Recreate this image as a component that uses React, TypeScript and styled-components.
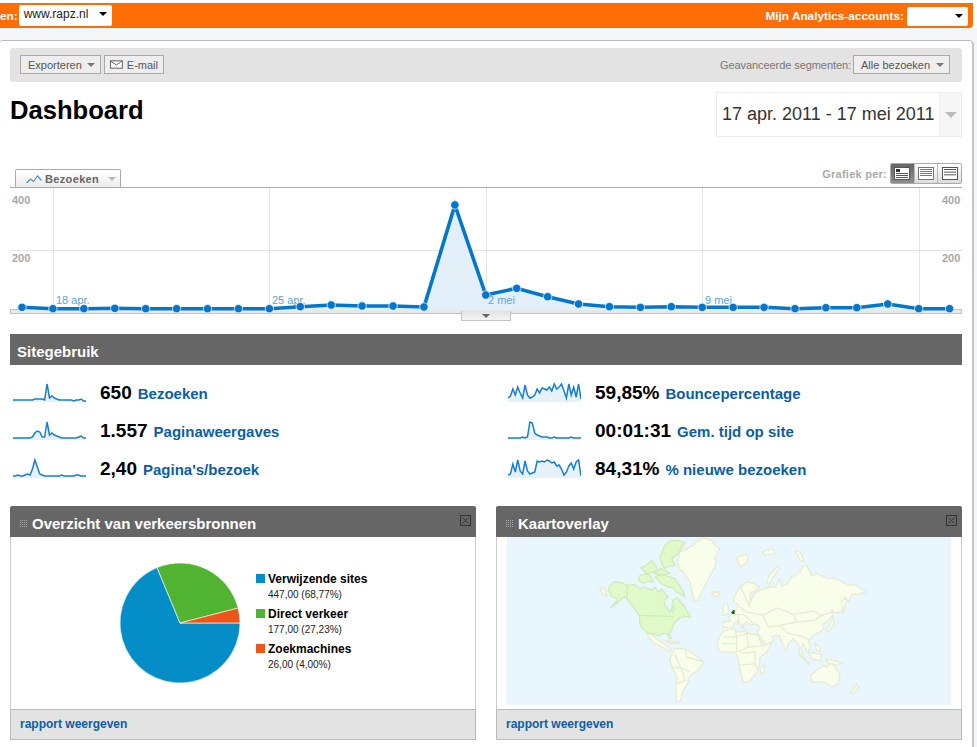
import React from 'react';
import styled, {createGlobalStyle} from 'styled-components';

const GlobalStyle = createGlobalStyle`
  html, body {
    margin: 0;
    padding: 0;
    background: #fff;
    font-family: "Liberation Sans", Arial, sans-serif;
  }
`;

const Page = styled.div`
  width: 977px;
  height: 747px;
  padding-top: 3px;
  box-sizing: border-box;
  overflow: hidden;
`;

const TopBar = styled.div`
  width: 973px;
  height: 25px;
  box-sizing: border-box;
  padding: 0 5px 0 0;
  background: #ff6d06;
  border-radius: 0 0 4px 0;
  display: flex;
  align-items: center;
  justify-content: space-between;
  color: #fff;
  font-size: 11.8px;
  font-weight: bold;
`;

const TopGroup = styled.div<{$gap: number}>`
  display: flex;
  align-items: center;
  gap: ${p => p.$gap}px;
`;

const TopSelect = styled.div<{$width: number; $height: number}>`
  width: ${p => p.$width}px;
  height: ${p => p.$height}px;
  box-sizing: border-box;
  padding: 0 5px 2px 5px;
  background: #fff;
  border-radius: 2px;
  display: flex;
  align-items: center;
  justify-content: space-between;
  color: #222;
  font-size: 12px;
  font-weight: normal;
  margin-top: ${p => (p.$height === 21 ? -1 : 2)}px;
`;

const BlackArrow = styled.span`
  margin-left: auto;
  border: 4px solid transparent;
  border-top: 4px solid #000;
  border-bottom: 0;
`;

const Gutter = styled.div`
  background: #f5f6f8;
  padding: 12px 3px 0 0;
  height: 719px;
  box-sizing: border-box;
`;

const Panel = styled.div`
  width: 974px;
  height: 707px;
  box-sizing: border-box;
  background: #fff;
  border-top: 1px solid #bbb;
  border-right: 2px solid #c4c4c4;
  border-radius: 3px 5px 0 0;
  padding: 7px 10px 0;
`;

const Toolbar = styled.div`
  height: 34px;
  box-sizing: border-box;
  padding: 7px 12px 0 10px;
  background: #e3e3e3;
  border-radius: 3px;
  display: flex;
  align-items: flex-start;
  gap: 3px;
  font-size: 11px;
`;

const ToolButton = styled.div<{$width: number}>`
  width: ${p => p.$width}px;
  height: 19px;
  box-sizing: border-box;
  padding: 0 5px 0 7px;
  border: 1px solid #a9a9a9;
  background: #eee;
  display: flex;
  align-items: center;
  gap: 4px;
  color: #555;
  white-space: nowrap;
`;

const MailButton = styled(ToolButton)`
  padding-left: 5px;
`;

const GrayArrow = styled.span<{$size?: number; $color?: string}>`
  margin-left: auto;
  border: ${p => p.$size ?? 4}px solid transparent;
  border-top: ${p => p.$size ?? 4}px solid ${p => p.$color ?? '#777'};
  border-bottom: 0;
`;

const CenterArrow = styled(GrayArrow)`
  margin-left: 0;
`;

const SegmentLabel = styled.span`
  margin-left: auto;
  color: #777;
  line-height: 20px;
  margin-right: -1px;
  letter-spacing: -0.07px;
`;

const TitleRow = styled.div`
  margin-top: 10px;
  height: 45px;
  display: flex;
  justify-content: space-between;
`;

const Title = styled.h1`
  margin: 0;
  font-size: 25.6px;
  line-height: 36px;
  font-weight: bold;
  color: #000;
`;

const DateBox = styled.div`
  width: 246px;
  box-sizing: border-box;
  border: 1px solid #eee;
  display: flex;
  align-items: center;
  justify-content: space-between;
  padding-left: 5px;
  font-size: 18px;
  color: #333;
  white-space: nowrap;
`;

const DateArrow = styled.div`
  width: 21px;
  height: 100%;
  background: #f6f6f6;
  border-left: 1px solid #eee;
  display: flex;
  align-items: center;
  justify-content: center;
`;

const ChartHeader = styled.div`
  margin-top: 26px;
  height: 24px;
  display: flex;
  justify-content: space-between;
  align-items: flex-end;
`;

const ChartTab = styled.div`
  width: 106px;
  height: 19px;
  margin: 0 0 -1px 5px;
  box-sizing: border-box;
  padding: 0 4px 0 10px;
  border: 1px solid #aaa;
  border-bottom: 0;
  border-radius: 2px 2px 0 0;
  background: linear-gradient(#fff, #ececec);
  display: flex;
  align-items: center;
  gap: 3px;
  font-size: 11px;
  font-weight: bold;
  color: #666;
  letter-spacing: 0.35px;
`;

const PeriodGroup = styled.div`
  align-self: flex-start;
  display: flex;
  align-items: center;
  gap: 3px;
  font-size: 11px;
  font-weight: bold;
  color: #aaa;
  letter-spacing: 0.25px;
`;

const PeriodButtons = styled.div`
  display: flex;
  width: 72px;
  box-sizing: border-box;
  height: 21px;
  border: 1px solid #aaa;
  border-radius: 2px;
  overflow: hidden;
`;

const PeriodButton = styled.div<{$active?: boolean}>`
  flex: 1;
  display: flex;
  align-items: center;
  justify-content: center;
  background: ${p => (p.$active ? 'linear-gradient(#666, #8e8e8e)' : 'linear-gradient(#fff, #ddd)')};
  border-left: ${p => (p.$active ? '0' : '1px solid #bbb')};
`;

const ChartWrap = styled.div`
  position: relative;
  height: 134px;
  border-top: 1px solid #aaa;
`;

const ChartSvg = styled.svg`
  display: block;
`;

const AxisText = styled.text`
  font: bold 11px "Liberation Sans", Arial, sans-serif;
  fill: #a8a8a8;
`;

const DateText = styled.text`
  font: 11px "Liberation Sans", Arial, sans-serif;
  fill: #5ca4d8;
`;

const ChartHandle = styled.div`
  position: absolute;
  left: 451px;
  top: 123px;
  width: 50px;
  height: 10px;
  box-sizing: border-box;
  border: 1px solid #c4c4c4;
  border-top: 0;
  background: linear-gradient(#e2e2e2, #f4f4f4);
  display: flex;
  align-items: center;
  justify-content: center;
`;

const SectionBar = styled.div`
  margin-top: 12px;
  height: 31px;
  padding-left: 7px;
  background: #666;
  color: #fff;
  font-size: 15px;
  font-weight: bold;
  line-height: 35px;
`;

const MetricGrid = styled.div`
  padding: 9px 0 0 3px;
  display: grid;
  grid-template-columns: 495px 1fr;
  grid-auto-rows: 38px;
`;

const MetricRow = styled.div`
  display: flex;
  align-items: center;
`;

const Spark = styled.svg`
  flex: none;
  margin-right: 14px;
`;

const MetricValue = styled.span`
  font-size: 19px;
  font-weight: bold;
  color: #000;
  margin-right: 6px;
`;

const MetricLabel = styled.span`
  font-size: 15px;
  font-weight: bold;
  color: #0b5ea6;
`;

const CardRow = styled.div`
  margin-top: 18px;
  display: flex;
  gap: 20px;
`;

const Card = styled.div`
  width: 466px;
`;

const CardHead = styled.div`
  height: 31px;
  box-sizing: border-box;
  padding: 0 5px 0 10px;
  background: #666;
  border-radius: 2px 2px 0 0;
  display: flex;
  align-items: flex-start;
  gap: 4px;
  color: #fff;
  font-size: 15px;
  font-weight: bold;
  line-height: 36px;
`;

const Grip = styled.svg`
  margin-top: 14px;
  flex: none;
`;

const CloseIcon = styled.svg`
  margin: 9px 0 0 auto;
  flex: none;
`;

const CardBody = styled.div<{$map?: boolean}>`
  height: 172px;
  box-sizing: border-box;
  border: 1px solid #ccc;
  border-width: 0 1px;
  display: flex;
  align-items: ${p => (p.$map ? 'flex-start' : 'center')};
  padding: ${p => (p.$map ? '0 10px' : '0 0 0 107.5px')};
`;

const PieSvg = styled.svg`
  flex: none;
`;

const Legend = styled.div`
  margin: 3px 0 0 15.5px;
`;

const LegendItem = styled.div`
  height: 35px;
  position: relative;
  padding: 0 0 0 12px;
  color: #000;
`;

const LegendSwatch = styled.span<{$color: string}>`
  position: absolute;
  left: 0;
  top: 2px;
  width: 9px;
  height: 9px;
  background: ${p => p.$color};
`;

const LegendName = styled.div`
  font-size: 12px;
  font-weight: bold;
  line-height: 15px;
`;

const LegendValue = styled.div`
  font-size: 10px;
  line-height: 15px;
  color: #222;
`;

const CardFoot = styled.div`
  height: 31px;
  box-sizing: border-box;
  padding-left: 9px;
  background: #e3e3e3;
  border: 1px solid #bbb;
  color: #0b5ea6;
  font-size: 12px;
  font-weight: bold;
  line-height: 28px;
`;

const MapSvg = styled.svg`
  display: block;
  background: #e9f6fe;
`;

// y positions read off the reference, as 3x crop pixels
const visitsY = [
  352, 356, 356, 355, 356, 356, 356, 356, 356, 350, 345, 348, 348, 351, 45, 315,
  295, 320, 342, 350, 352, 350, 352, 352, 352, 356, 353, 353, 342, 356, 356
];
const points = visitsY.map((y, i) => [22 + i * 30.92, 190 + y / 3]);
const linePoints = points.map(p => `${p[0].toFixed(1)},${p[1].toFixed(1)}`).join(' ');
const areaPoints = `22,310 ${linePoints} 950,310`;

const sparkPath = (values: number[]) =>
  values.map((v, i) => `${(i * 73) / 30},${19 - v}`).join(' ');

const METRICS = [
  {
    value: '650', label: 'Bezoeken',
    spark: [1, 1, 1, 1, 1, 1, 1, 1, 1, 2, 2, 2, 2, 1, 17, 3, 5, 3, 2, 1, 1, 1, 1, 1, 1, 0, 1, 1, 2, 0, 0]
  },
  {
    value: '59,85%', label: 'Bouncepercentage',
    spark: [3, 5, 12, 6, 14, 8, 3, 16, 6, 3, 4, 6, 12, 8, 13, 12, 11, 14, 10, 17, 12, 14, 17, 10, 3, 17, 6, 14, 4, 17, 2]
  },
  {
    value: '1.557', label: 'Paginaweergaves',
    spark: [1, 1, 1, 1, 1, 1, 1, 1, 2, 6, 8, 7, 2, 2, 17, 4, 6, 4, 3, 2, 1, 1, 1, 1, 1, 1, 1, 2, 3, 1, 1]
  },
  {
    value: '00:01:31', label: 'Gem. tijd op site',
    spark: [1, 1, 1, 1, 1, 1, 2, 1, 2, 17, 16, 6, 4, 3, 2, 2, 2, 1, 1, 2, 1, 1, 1, 1, 1, 1, 2, 1, 1, 1, 1]
  },
  {
    value: '2,40', label: "Pagina's/bezoek",
    spark: [1, 1, 2, 1, 1, 2, 3, 2, 8, 17, 10, 3, 2, 1, 1, 1, 1, 1, 1, 1, 2, 1, 1, 1, 1, 1, 2, 2, 1, 1, 1]
  },
  {
    value: '84,31%', label: '% nieuwe bezoeken',
    spark: [2, 3, 13, 5, 17, 6, 3, 16, 6, 3, 4, 5, 16, 15, 16, 15, 17, 16, 14, 15, 11, 12, 8, 2, 5, 11, 14, 8, 15, 17, 1]
  }
];

const Sparkline = ({values}: {values: number[]}) => (
  <Spark width={73} height={22} viewBox="0 0 73 22">
    <polygon points={`0,20 ${sparkPath(values)} 73,20`} fill="#e6f1fa" />
    <polyline points={sparkPath(values)} fill="none" stroke="#1580d0" strokeWidth={1.5} />
  </Spark>
);

const PieChart = () => {
  const r = 60;
  const at = (deg: number) => {
    const a = (deg * Math.PI) / 180;
    return `${61 + r * Math.cos(a)},${61 - r * Math.sin(a)}`;
  };
  return (
    <PieSvg width={122} height={122} viewBox="0 0 122 122">
      <path d={`M61,61 L${at(0)} A60,60 0 1 1 ${at(112.5)} Z`} fill="#058dc7" stroke="#fff" strokeWidth={0.6} />
      <path d={`M61,61 L${at(112.5)} A60,60 0 0 1 ${at(14.4)} Z`} fill="#50b432" stroke="#fff" strokeWidth={0.6} />
      <path d={`M61,61 L${at(14.4)} A60,60 0 0 1 ${at(0)} Z`} fill="#ed561b" stroke="#fff" strokeWidth={0.6} />
    </PieSvg>
  );
};

const GREEN_LAND = [
  '58,150 70,135 90,135 112,145 135,143 150,155 165,150 185,160 195,150 205,165 215,155 225,170 235,180 222,190 225,205 240,225 250,210 248,190 262,183 272,195 285,210 292,225 302,240 285,238 270,242 262,250 250,262 245,280 238,290 245,305 238,305 232,290 215,290 205,297 195,292 175,288 158,275 150,262 148,235 130,210 118,195 105,180 95,185 80,200 62,212 78,195 82,185 65,178 55,162',
  '210,60 218,40 225,25 240,12 255,10 285,15 275,32 265,50 245,65 255,85 235,88 225,95 215,80',
  '195,120 210,113 225,115 255,125 268,145 280,165 285,180 260,165 248,152 235,150 215,140',
  '150,115 175,110 192,135 175,132 160,140 145,130',
  '152,92 170,85 185,70 195,82 205,100 170,110',
  '190,108 215,95 240,108 215,115',
  '245,205 255,215 248,225'
];

const WEST_LAND = [
  '270,45 290,35 310,25 325,10 340,3 365,10 375,25 390,35 375,60 378,75 375,90 360,115 350,135 335,165 325,190 312,190 305,160 300,135 280,105 268,95 262,75',
  '168,288 185,292 205,310 225,322 245,340 240,345 215,330 195,320 180,305',
  '225,310 255,315 270,318 245,320',
  '240,365 255,335 285,335 310,350 342,375 325,400 300,415 295,435 280,460 270,495 258,490 258,450 262,420 245,390',
  '28,150 45,155 52,178 38,170',
  '365,165 385,165 385,178 372,178'
];

const EAST_LAND = [
  '68,255 92,252 85,240 95,230 110,215 118,205 100,195 105,175 120,150 140,135 160,140 178,150 165,165 152,165 150,200 160,175 180,160 195,155 210,150 225,150 240,125 245,148 262,140 275,120 300,105 310,85 320,85 335,115 350,110 385,125 395,122 420,130 440,143 470,145 497,165 475,172 455,172 445,195 435,180 428,215 415,228 400,225 395,218 398,235 385,250 368,262 372,275 360,285 345,292 335,300 325,315 332,335 320,340 310,320 303,335 313,365 300,350 295,320 280,305 265,320 258,342 245,315 238,295 215,298 222,310 200,325 180,300 172,285 180,270 170,262 150,262 140,255 128,265 135,278 120,265 112,252 100,262 100,270 70,272',
  '52,322 58,300 70,283 90,277 105,275 112,285 135,283 150,290 172,292 180,312 190,325 215,318 200,345 180,360 178,385 170,405 150,432 130,438 125,420 118,390 115,365 105,345 85,345 65,345 55,335',
  '332,415 345,405 355,395 375,385 380,392 395,375 405,392 420,410 415,440 395,450 380,440 370,435 335,435',
  '180,395 195,382 190,410 183,412',
  '70,205 82,200 88,228 68,235',
  '35,168 55,165 58,175 42,178',
  '110,60 140,52 145,70 125,90 115,80',
  '185,45 220,35 225,50 195,55',
  '200,135 210,110 235,88 238,95 220,120 205,145',
  '285,40 300,45 315,75 300,70',
  '295,350 330,385 325,375 300,355',
  '325,345 365,352 360,372 335,365',
  '345,320 360,330 360,345 350,340',
  '375,365 430,378 410,385 385,378',
  '425,190 440,185 430,230',
  '380,280 400,240 402,262 385,285',
  '450,470 470,440 475,452 455,472'
];

const EAST_BORDERS = [
  '188,235 230,213 280,232 340,222 365,235 395,225',
  '280,232 290,255 345,250 365,235',
  '188,235 205,270 240,265 290,255',
  '240,265 265,290 300,295 330,310',
  '120,210 140,225 165,230 190,235',
  '100,235 130,232 145,245 165,262',
  '120,145 140,190 150,210',
  '115,240 118,262',
  '70,300 110,300 110,345',
  '105,275 110,300 140,290 145,330 115,345',
  '140,290 175,295',
  '145,330 195,325',
  '115,385 165,380 175,400',
  '125,350 165,345 165,380',
  '65,320 110,320'
];

const WEST_BORDERS = [
  '255,350 270,390 300,405',
  '245,390 275,395 285,430 262,440',
  '285,335 290,360 340,375'
];

const WorldMap = () => (
  <MapSvg width={444} height={168} viewBox="507 537 444 168">
    <g transform="translate(590 537) scale(0.3333)" strokeWidth={4} strokeLinejoin="round">
      {WEST_LAND.map(p => <polygon key={p} points={p} fill="#f8fee9" stroke="#e6ecd4" />)}
      {GREEN_LAND.map(p => <polygon key={p} points={p} fill="#dff9c9" stroke="#d2eabd" />)}
      <polyline points="148,235 240,238 250,242" fill="none" stroke="#d2eabd" />
      <polyline points="112,145 112,190" fill="none" stroke="#d2eabd" />
      {WEST_BORDERS.map(p => <polyline key={p} points={p} fill="none" stroke="#e6ecd4" />)}
    </g>
    <g transform="translate(700 537) scale(0.3333)" strokeWidth={4} strokeLinejoin="round">
      {EAST_LAND.map(p => <polygon key={p} points={p} fill="#f8fee9" stroke="#e6ecd4" />)}
      {EAST_BORDERS.map(p => <polyline key={p} points={p} fill="none" stroke="#e6ecd4" />)}
      <polygon points="94,226 100,219 104,220 104,231 96,231" fill="#1a6a10" />
    </g>
  </MapSvg>
);

const GripIcon = () => (
  <Grip width={8} height={8} viewBox="0 0 8 8">
    <path d="M0 .5h8M0 2.5h8M0 4.5h8M0 6.5h8" stroke="#aaa" strokeDasharray="1 1" />
  </Grip>
);

const CardClose = () => (
  <CloseIcon width={11} height={11} viewBox="0 0 11 11">
    <rect x={0.5} y={0.5} width={10} height={10} fill="none" stroke="#333" />
    <path d="M2.5 2.5l6 6M8.5 2.5l-6 6" stroke="#333" />
  </CloseIcon>
);

const MailIcon = () => (
  <svg width={14} height={9} viewBox="0 0 14 9">
    <rect x={0.5} y={0.5} width={13} height={8} fill="#fff" stroke="#555" />
    <path d="M1 1l6 4 6-4" fill="none" stroke="#555" />
  </svg>
);

const TrendIcon = () => (
  <svg width={16} height={10} viewBox="0 0 16 10">
    <path d="M.5 9l4-4 3 2.5L11.5 2l4 4.5" fill="none" stroke="#4a90d6" strokeWidth={1.2} />
  </svg>
);

const PeriodIcon = ({color, head, rows}: {color: string; head?: boolean; rows: number}) => (
  <svg width={16} height={13} viewBox="0 0 16 13">
    <rect x={0.5} y={0.5} width={15} height={12} fill="#fff" stroke={color} />
    {head && <rect x={2} y={2} width={4} height={3} fill="#333" />}
    {Array.from({length: rows}).map((_, i) => {
      const y = head ? 6.5 + i * 2 : 2.5 + (i * 8) / rows;
      return <line key={i} x1={2} x2={14} y1={y} y2={y} stroke={color} />;
    })}
  </svg>
);

const GRID_X = [53, 269, 486, 702, 919];

export default function App() {
  return (
    <Page>
      <GlobalStyle />
      <TopBar>
        <TopGroup $gap={1}>
          <span>en:</span>
          <TopSelect $width={93} $height={21}>www.rapz.nl<BlackArrow /></TopSelect>
        </TopGroup>
        <TopGroup $gap={3}>
          <span>Mijn Analytics-accounts:</span>
          <TopSelect $width={61} $height={19}><BlackArrow /></TopSelect>
        </TopGroup>
      </TopBar>
      <Gutter>
        <Panel>
          <Toolbar>
            <ToolButton $width={81}>Exporteren<GrayArrow /></ToolButton>
            <MailButton $width={60}><MailIcon />E-mail</MailButton>
            <SegmentLabel>Geavanceerde segmenten:</SegmentLabel>
            <ToolButton $width={97}>Alle bezoeken<GrayArrow /></ToolButton>
          </Toolbar>
          <TitleRow>
            <Title>Dashboard</Title>
            <DateBox>
              17 apr. 2011 - 17 mei 2011
              <DateArrow><CenterArrow $size={6} $color="#bbb" /></DateArrow>
            </DateBox>
          </TitleRow>
          <ChartHeader>
            <ChartTab><TrendIcon />Bezoeken<GrayArrow $size={4} $color="#bbb" /></ChartTab>
            <PeriodGroup>
              Grafiek per:
              <PeriodButtons>
                <PeriodButton $active><PeriodIcon color="#555" head rows={3} /></PeriodButton>
                <PeriodButton><PeriodIcon color="#777" rows={4} /></PeriodButton>
                <PeriodButton><PeriodIcon color="#555" rows={3} /></PeriodButton>
              </PeriodButtons>
            </PeriodGroup>
          </ChartHeader>
          <ChartWrap>
            <ChartSvg width={952} height={134} viewBox="10 188 952 134">
              {GRID_X.map(x => <line key={x} x1={x + 0.5} x2={x + 0.5} y1={188} y2={310} stroke="#e4e4e4" />)}
              <line x1={10} x2={962} y1={250.5} y2={250.5} stroke="#e4e4e4" />
              <rect x={10.5} y={309.5} width={951} height={4} fill="#e8e8e8" stroke="#c4c4c4" />
              <polygon points={areaPoints} fill="#e2eff9" />
              <AxisText x={12} y={204}>400</AxisText>
              <AxisText x={12} y={262}>200</AxisText>
              <AxisText x={942} y={204}>400</AxisText>
              <AxisText x={942} y={262}>200</AxisText>
              <DateText x={56} y={304}>18 apr.</DateText>
              <DateText x={272} y={304}>25 apr.</DateText>
              <DateText x={488} y={304}>2 mei</DateText>
              <DateText x={705} y={304}>9 mei</DateText>
              <polyline points={linePoints} fill="none" stroke="#0077cc" strokeWidth={3.6} />
              {points.map(p => (
                <circle key={p[0]} cx={p[0]} cy={p[1]} r={4.2} fill="#0077cc" stroke="#fff" strokeWidth={0.7} />
              ))}
            </ChartSvg>
            <ChartHandle><CenterArrow $size={4} $color="#666" /></ChartHandle>
          </ChartWrap>
          <SectionBar>Sitegebruik</SectionBar>
          <MetricGrid>
            {METRICS.map(m => (
              <MetricRow key={m.label}>
                <Sparkline values={m.spark} />
                <MetricValue>{m.value}</MetricValue>
                <MetricLabel>{m.label}</MetricLabel>
              </MetricRow>
            ))}
          </MetricGrid>
          <CardRow>
            <Card>
              <CardHead><GripIcon />Overzicht van verkeersbronnen<CardClose /></CardHead>
              <CardBody>
                <PieChart />
                <Legend>
                  <LegendItem>
                    <LegendSwatch $color="#058dc7" />
                    <LegendName>Verwijzende sites</LegendName>
                    <LegendValue>447,00 (68,77%)</LegendValue>
                  </LegendItem>
                  <LegendItem>
                    <LegendSwatch $color="#50b432" />
                    <LegendName>Direct verkeer</LegendName>
                    <LegendValue>177,00 (27,23%)</LegendValue>
                  </LegendItem>
                  <LegendItem>
                    <LegendSwatch $color="#ed561b" />
                    <LegendName>Zoekmachines</LegendName>
                    <LegendValue>26,00 (4,00%)</LegendValue>
                  </LegendItem>
                </Legend>
              </CardBody>
              <CardFoot>rapport weergeven</CardFoot>
            </Card>
            <Card>
              <CardHead><GripIcon />Kaartoverlay<CardClose /></CardHead>
              <CardBody $map><WorldMap /></CardBody>
              <CardFoot>rapport weergeven</CardFoot>
            </Card>
          </CardRow>
        </Panel>
      </Gutter>
    </Page>
  );
}
